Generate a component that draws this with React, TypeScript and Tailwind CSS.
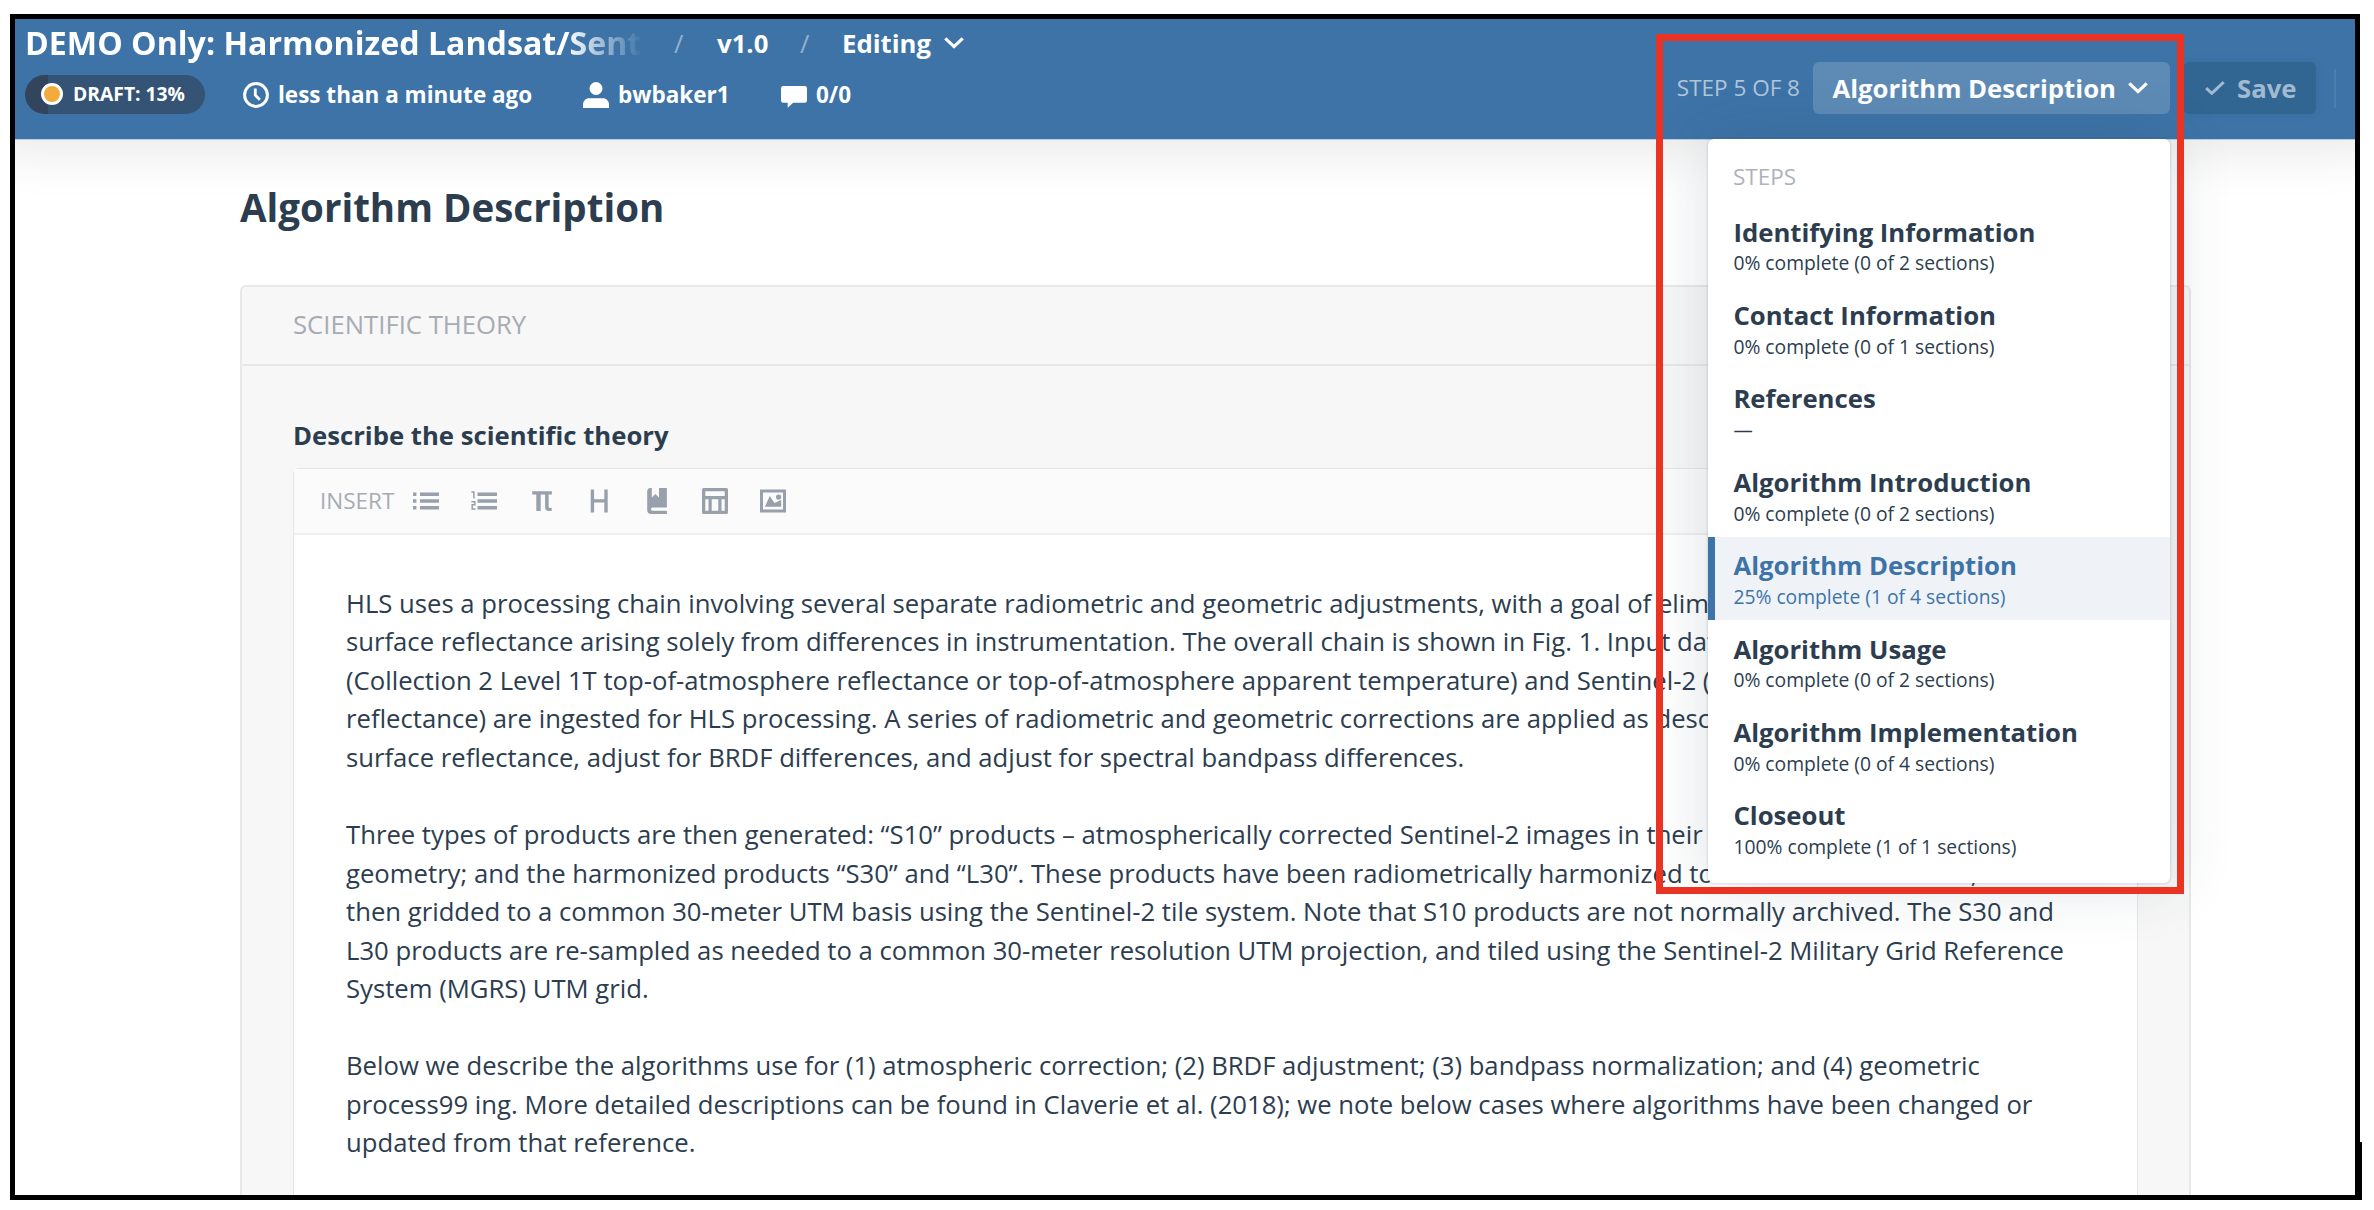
import type { ReactNode } from "react";

const steps = [
  { title: "Identifying Information", note: "0% complete (0 of 2 sections)" },
  { title: "Contact Information", note: "0% complete (0 of 1 sections)" },
  { title: "References", note: "—" },
  { title: "Algorithm Introduction", note: "0% complete (0 of 2 sections)" },
  { title: "Algorithm Description", note: "25% complete (1 of 4 sections)", active: true },
  { title: "Algorithm Usage", note: "0% complete (0 of 2 sections)" },
  { title: "Algorithm Implementation", note: "0% complete (0 of 4 sections)" },
  { title: "Closeout", note: "100% complete (1 of 1 sections)" },
];

const paragraphs = [
  [
    "HLS uses a processing chain involving several separate radiometric and geometric adjustments, with a goal of eliminating differences in",
    "surface reflectance arising solely from differences in instrumentation. The overall chain is shown in Fig. 1. Input data from Landsat 8",
    "(Collection 2 Level 1T top-of-atmosphere reflectance or top-of-atmosphere apparent temperature) and Sentinel-2 (Level 1C",
    "reflectance) are ingested for HLS processing. A series of radiometric and geometric corrections are applied as described below to",
    "surface reflectance, adjust for BRDF differences, and adjust for spectral bandpass differences.",
  ],
  [
    "Three types of products are then generated: “S10” products – atmospherically corrected Sentinel-2 images in their native",
    "geometry; and the harmonized products “S30” and “L30”. These products have been radiometrically harmonized to the maximum extent, and",
    "then gridded to a common 30-meter UTM basis using the Sentinel-2 tile system. Note that S10 products are not normally archived. The S30 and",
    "L30 products are re-sampled as needed to a common 30-meter resolution UTM projection, and tiled using the Sentinel-2 Military Grid Reference",
    "System (MGRS) UTM grid.",
  ],
  [
    "Below we describe the algorithms use for (1) atmospheric correction; (2) BRDF adjustment; (3) bandpass normalization; and (4) geometric",
    "process99 ing. More detailed descriptions can be found in Claverie et al. (2018); we note below cases where algorithms have been changed or",
    "updated from that reference.",
  ],
];

function Chevron({ className }: { className: string }) {
  return (
    <svg className={className} viewBox="0 0 20 12" fill="none" stroke="currentColor" strokeWidth="3.2">
      <path d="M1.3 1.4 10 9.6l8.7-8.2" />
    </svg>
  );
}

function ToolIcon({ children }: { children: ReactNode }) {
  return (
    <svg className="h-[26px] w-[26px] shrink-0" viewBox="0 0 26 26" fill="currentColor">
      {children}
    </svg>
  );
}

function Toolbar() {
  return (
    <div className="flex h-[66px] items-center border-b-2 border-[#efefef] bg-[#fbfbfb] pl-[26px] text-[#98a0ac]">
      <span className="w-[93px] text-[22.5px] leading-[32px] text-[#a6abb5]">INSERT</span>
      <div className="flex gap-[31.8px]">
        <ToolIcon>
          <path d="M0 4.5h3.4v3.4H0zM0 11.3h3.4v3.4H0zM0 18h3.4v3.4H0zM7 4.5h19.4v3.4H7zM7 11.3h19.4v3.4H7zM7 18h19.4v3.4H7z" />
        </ToolIcon>
        <ToolIcon>
          <path d="M6.5 4.5h19.6v3.4H6.5zM6.5 11.3h19.6v3.4H6.5zM6.5 18h19.6v3.4H6.5z" />
          <path d="M.4 4h2.5v6.4M.3 13.8h3.6v3H1.200v4.200h3.400" fill="none" stroke="currentColor" strokeWidth="1.5" />
        </ToolIcon>
        <ToolIcon>
          <path d="M3.2 3.2h19.7v3.3h-3.3v12.1c0 .9.5 1.3 1.5 1.3h1.6V23h-2.9c-2.4 0-3.7-1.3-3.7-3.5V6.5h-4.400V23H7.300V6.500H3.200z" />
        </ToolIcon>
        <ToolIcon>
          <path d="M4.700 1.500h3.400v9.800h10.200V1.500h3.400v22.900h-3.400v-9.800H8.100v9.800H4.700z" />
        </ToolIcon>
        <ToolIcon>
          <path d="M6.500 0h1.300v9.600L11.400 6 15 9.600V0h7.900v19.500H8.300a1.700 1.700 0 0 0 0 3.300h14.600V26H7.200A4 4 0 0 1 3.200 22V3.500A3.500 3.500 0 0 1 6.500 0z" />
        </ToolIcon>
        <ToolIcon>
          <path
            fillRule="evenodd"
            d="M1.600 0h22.800A1.600 1.600 0 0 1 26 1.600v22.800a1.600 1.600 0 0 1-1.600 1.600H1.600A1.600 1.600 0 0 1 0 24.400V1.600A1.600 1.600 0 0 1 1.600 0zM3.300 3.300v4.800h19.400V3.300zM3.300 11.300v11.400h3.200V11.300zM9.700 11.300v11.400h6.600V11.300zM19.500 11.300v11.400h3.200V11.300z"
          />
        </ToolIcon>
        <ToolIcon>
          <path fillRule="evenodd" d="M0 1.600h26v22.800H0zM3 4.600v16.800h20V4.600z" />
          <path d="M4.900 18.700 9.800 7.900l4.600 7.200 6.800-3.200v6.800z" />
          <circle cx="18.600" cy="9" r="2.600" />
        </ToolIcon>
      </div>
    </div>
  );
}

function StepsMenu() {
  return (
    <div className="absolute top-[120px] left-[1693px] z-20 h-[744px] w-[462px] rounded-[6px] bg-white pt-[17px] shadow-[0_0_0_1.6px_rgba(44,61,79,0.08),0_0_64px_rgba(44,61,79,0.16)]">
      <div className="mb-[6.5px] pl-[25px] text-[22.5px] leading-[41px] text-[#adb2ba]">STEPS</div>
      <ul>
        {steps.map((s) => (
          <li
            key={s.title}
            className={
              s.active
                ? "flex h-[83.4px] border-l-[7px] border-[#3d73a7] bg-[#eff3f8] pl-[18.4px] text-[#3d73a7]"
                : "flex h-[83.4px] pl-[25.4px] text-[#2c3d4f]"
            }
          >
            <div className="pt-[9.1px]">
              <div className="text-[25.73px] leading-[38.6px] font-bold">{s.title}</div>
              <div className="pt-[0.3px] text-[19.3px] leading-[24.4px]">{s.note}</div>
            </div>
          </li>
        ))}
      </ul>
    </div>
  );
}

function Header() {
  return (
    <header className="relative z-10 flex h-[121px] shrink-0 justify-between border-b border-[#bccfe0] bg-[#3d73a7] text-white shadow-[0_-12px_48px_24px_rgba(0,0,0,0.09)]">
      <div>
        <div className="flex h-[48px] items-center pl-[10px] text-[25.73px] font-bold">
          <h1 className="w-[622px] text-[32.16px] leading-[48px] whitespace-nowrap [mask-image:linear-gradient(to_right,black_541px,transparent_618px)]">
            DEMO Only: Harmonized Landsat/Sent
          </h1>
          <span className="ml-[27px] w-[10px] font-normal text-white/45">/</span>
          <span className="ml-[33px] w-[50px]">v1.0</span>
          <span className="ml-[33px] w-[10px] font-normal text-white/45">/</span>
          <span className="ml-[32px] w-[102px]">Editing</span>
          <Chevron className="mb-[1px] h-[12px] w-[20px]" />
        </div>
        <div className="mt-[8px] flex h-[39px] items-center pl-[10px] text-[22.5px] font-bold">
          <div className="flex h-[39px] w-[180px] items-center rounded-full bg-[linear-gradient(to_right,#32455c_13%,#355475_13%)] pl-[16px] text-[19.3px]">
            <span className="mb-[1px] h-[22px] w-[22px] rounded-full border-[3.5px] border-white bg-[#f2ab3d]" />
            <span className="ml-[10px]">DRAFT: 13%</span>
          </div>
          <svg className="ml-[38px] h-[26px] w-[26px]" viewBox="0 0 26 26" fill="none" stroke="currentColor" strokeWidth="3">
            <circle cx="13" cy="13" r="11.400" />
            <path d="M12.300 6.500v6.700l4.600 4.600" strokeWidth="2.800" />
          </svg>
          <span className="ml-[9px] w-[304px]">less than a minute ago</span>
          <svg className="ml-[1px] h-[26px] w-[26px]" viewBox="0 0 26 26" fill="currentColor">
            <ellipse cx="13" cy="6.500" rx="6.500" ry="6.500" />
            <path d="M0 26v-3.500c0-3.600 2.800-6.300 6.300-6.300h13.400c3.500 0 6.300 2.700 6.300 6.300V26z" />
          </svg>
          <span className="ml-[9px] w-[163px]">bwbaker1</span>
          <svg className="mt-[4px] h-[22px] w-[26px]" viewBox="0 0 26 22" fill="currentColor">
            <path d="M2.200 0h21.600A2.200 2.200 0 0 1 26 2.200v12.300a2.200 2.200 0 0 1-2.200 2.200H12.200L6.700 21.800v-5.100H2.200A2.200 2.200 0 0 1 0 14.500V2.200A2.200 2.200 0 0 1 2.200 0z" />
          </svg>
          <span className="ml-[9px]">0/0</span>
        </div>
      </div>
      <div className="mt-[43px] flex h-[52px] items-center text-[25.73px] font-bold">
        <span className="mr-[13px] text-[22.5px] font-normal text-white/60">STEP 5 OF 8</span>
        <button className="flex h-[52px] w-[357px] items-center rounded-[6px] bg-[#5d8bb6] pl-[19.5px] font-bold">
          <span className="w-[295.5px] text-left">Algorithm Description</span>
          <Chevron className="h-[12px] w-[20px]" />
        </button>
        <button className="ml-[13px] flex h-[52px] w-[133px] items-center rounded-[6px] bg-[#316592] pl-[22px] font-bold text-[#a0bad2] shadow-[0_0_12px_rgba(0,0,0,0.05)]">
          <svg className="h-[14px] w-[20px]" viewBox="0 0 20 14" fill="none" stroke="currentColor" strokeWidth="3">
            <path d="M1.200 7.200 6.800 12.300 18.700 1.200" />
          </svg>
          <span className="ml-[12px]">Save</span>
        </button>
        <span className="mr-[19px] ml-[18px] h-[39px] w-[2px] bg-white/8" />
      </div>
    </header>
  );
}

export default function App() {
  return (
    <div className="relative h-[1210px] w-[2374px] overflow-hidden bg-white pt-[14px] pl-[10px] font-['Open_Sans',sans-serif] text-[#2c3d4f]">
      <div className="relative flex h-[1186px] w-[2350px] flex-col overflow-hidden border-[5px] border-black bg-white">
        <Header />
        <StepsMenu />
        <main className="w-[2176px] pl-[225px]">
          <h2 className="mt-[39px] h-[106px] text-[38.5px] leading-[56px] font-bold">Algorithm Description</h2>
          <section className="h-[960px] w-[1951px] rounded-[6px] border-2 border-[#e7e8e9] bg-[#f7f7f7]">
            <div className="flex h-[79px] items-center border-b-2 border-[#e7e8e9] pl-[51px] text-[25.7px] text-[#a6abb4]">
              SCIENTIFIC THEORY
            </div>
            <div className="pt-[50px] pl-[51px]">
              <h3 className="h-[52px] text-[25.7px] leading-[39px] font-bold">Describe the scientific theory</h3>
              <div className="h-[900px] w-[1845px] rounded-t-[6px] border border-[#e4e5e7] bg-white">
                <Toolbar />
                <div className="flex flex-col gap-[38.5px] pt-[49.8px] pl-[52px] text-[25.68px] leading-[38.54px] whitespace-nowrap">
                  {paragraphs.map((lines) => (
                    <p key={lines[0]}>
                      {lines.map((line) => (
                        <span key={line} className="block">
                          {line}
                        </span>
                      ))}
                    </p>
                  ))}
                </div>
              </div>
            </div>
          </section>
        </main>
      </div>
      <div className="absolute top-[34px] left-[1656px] z-30 h-[860px] w-[528px] border-[7px] border-[#ea3323]" />
      <div className="absolute top-[1142px] left-[2360px] h-[58px] w-[2px] bg-black" />
    </div>
  );
}
